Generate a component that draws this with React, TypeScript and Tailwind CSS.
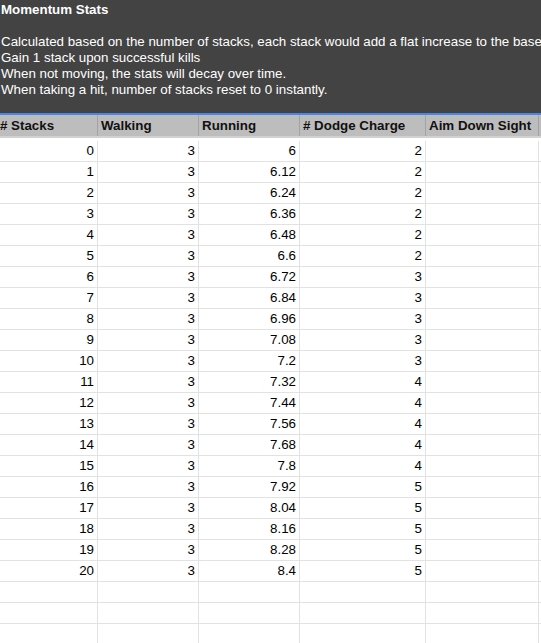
const headers = ["# Stacks", "Walking", "Running", "# Dodge Charge", "Aim Down Sight"];

const running = ["6", "6.12", "6.24", "6.36", "6.48", "6.6", "6.72", "6.84", "6.96", "7.08", "7.2", "7.32", "7.44", "7.56", "7.68", "7.8", "7.92", "8.04", "8.16", "8.28", "8.4"];

function dodgeFor(i: number) {
  if (i <= 5) return 2;
  if (i <= 10) return 3;
  if (i <= 15) return 4;
  return 5;
}

const rows = running.map((r, i) => ({
  stacks: String(i),
  walking: "3",
  running: r,
  dodge: String(dodgeFor(i)),
}));

const cols = "grid grid-cols-[98px_101px_101px_126px_113px_1fr]";

export default function App() {
  return (
    <div className="w-[541px] h-[643px] overflow-hidden bg-white font-['Liberation_Sans',Arial,sans-serif] text-[13.33px]">
      {/* Notes block */}
      <div className="h-[113px] bg-[#434343] pt-[2px] pl-[1px] leading-4 text-white whitespace-nowrap">
        <div className="font-bold">Momentum Stats</div>
        <div className="h-4" />
        <div>Calculated based on the number of stacks, each stack would add a flat increase to the base</div>
        <div>Gain 1 stack upon successful kills</div>
        <div>When not moving, the stats will decay over time.</div>
        <div>When taking a hit, number of stacks reset to 0 instantly.</div>
      </div>
      <div className="h-[2px] bg-[#4a86e8]" />

      {/* Header row */}
      <div className={`${cols} h-[23px] bg-[#bdbdbd] border-b-2 border-[#d2d2d2]`}>
        {headers.map((h, i) => (
          <div
            key={h}
            className={`flex items-center border-r border-[#a3a3a3] font-bold text-[#111] whitespace-nowrap ${i === 0 ? "pl-0" : "pl-[3px]"}`}
          >
            {h}
          </div>
        ))}
        <div />
      </div>

      {/* Data rows */}
      {rows.map((r, i) => (
        <div
          key={r.stacks}
          className={`${cols} ${i === 0 ? "h-[24px] pt-[3px]" : "h-[21px]"} border-b border-[#e2e2e2] text-black`}
        >
          <div className="flex items-center justify-end border-r border-[#e2e2e2] pr-[3px]">{r.stacks}</div>
          <div className="flex items-center justify-end border-r border-[#e2e2e2] pr-[3px]">{r.walking}</div>
          <div className="flex items-center justify-end border-r border-[#e2e2e2] pr-[3px]">{r.running}</div>
          <div className="flex items-center justify-end border-r border-[#e2e2e2] pr-[3px]">{r.dodge}</div>
          <div className="border-r border-[#e2e2e2]" />
          <div />
        </div>
      ))}
      {[0, 1, 2, 3].map((k) => (
        <div key={k} className={`${cols} h-[21px] border-b border-[#e2e2e2]`}>
          <div className="border-r border-[#e2e2e2]" />
          <div className="border-r border-[#e2e2e2]" />
          <div className="border-r border-[#e2e2e2]" />
          <div className="border-r border-[#e2e2e2]" />
          <div className="border-r border-[#e2e2e2]" />
          <div />
        </div>
      ))}
    </div>
  );
}
